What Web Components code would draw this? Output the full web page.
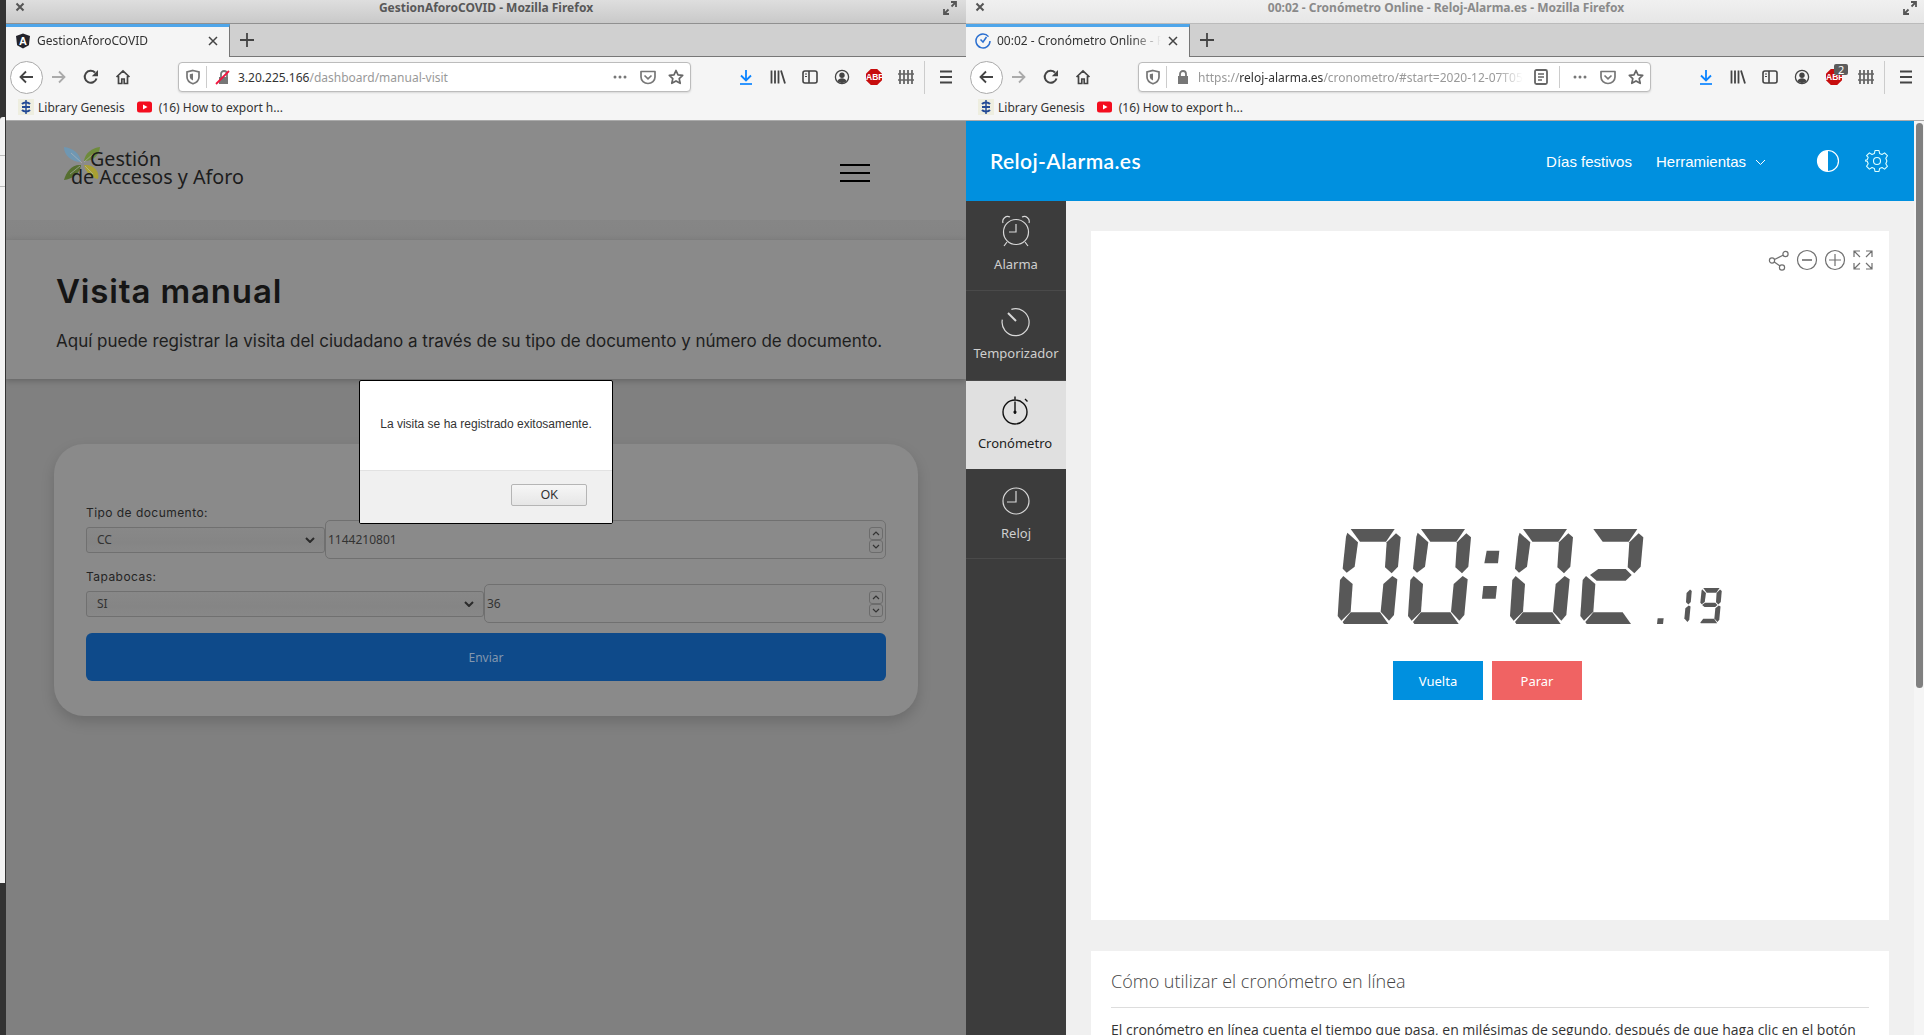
<!DOCTYPE html>
<html lang="es"><head><meta charset="utf-8"><title>Escritorio</title>
<style>html,body{margin:0;padding:0;width:1924px;height:1035px;overflow:hidden;background:#333}</style>
</head><body>
<x-desktop>
  <x-edge></x-edge>
  <fx-window wintitle="GestionAforoCOVID - Mozilla Firefox" tabtitle="GestionAforoCOVID" favicon="angular" active
     host1="3.20.225.166" rest="/dashboard/manual-visit" lock="broken">
    <gestion-page></gestion-page>
  </fx-window>
  <fx-window wintitle="00:02 - Cronómetro Online - Reloj-Alarma.es - Mozilla Firefox" tabtitle="00:02 - Cronómetro Online - Reloj-Alarma.es" favicon="clock"
     pre="https://" host1="reloj-alarma.es" rest="/cronometro/#start=2020-12-07T05:00:00" lock="ok" reader badge="2">
    <reloj-page></reloj-page>
  </fx-window>
</x-desktop>
<script>
const S=(inner,w=16,h=16,vb='0 0 16 16')=>`<svg width="${w}" height="${h}" viewBox="${vb}" fill="none" aria-hidden="true">${inner}</svg>`;
const ICON={
 back:S('<path d="M15 8H2M8 2.500 2.500 8 8 13.500" stroke="#444" stroke-width="1.800"/>'),
 fwd:S('<path d="M1 8h13M8 2.500 13.500 8 8 13.500" stroke="#aaa" stroke-width="1.800"/>'),
 reload:S('<path d="M13.500 9.500A6 6 0 1 1 12 3.500" stroke="#444" stroke-width="2"/><path d="M15 1v6.200H8.800z" fill="#444"/>'),
 home:S('<path d="M1.500 8 8 1.800 14.500 8M3.500 7v7.500h3.300V10h2.400v4.500h3.300V7" stroke="#444" stroke-width="1.700"/>'),
 shield:S('<path d="M8 1.500 14 3v5c0 3.300-2.700 5.600-6 6.800C4.700 13.600 2 11.300 2 8V3z" stroke="#777" stroke-width="1.700"/><path d="M8 4.500v7c-1.800-.8-3.200-2-3.200-3.800V5.200z" fill="#777"/>'),
 lockok:S('<path d="M3 7h10v8H3z" fill="#777"/><path d="M5 7V5a3 3 0 0 1 6 0v2" stroke="#777" stroke-width="1.800"/>',16,16),
 lockbroken:S('<path d="M4 8h9v7H4z" fill="#777"/><path d="M6 8V5a3 3 0 0 1 6 0v3" stroke="#777" stroke-width="1.800"/><path d="M1 15 14 2" stroke="#f0173f" stroke-width="1.800"/>'),
 dots:S('<circle cx="3" cy="8" r="1.500" fill="#777"/><circle cx="8" cy="8" r="1.500" fill="#777"/><circle cx="13" cy="8" r="1.500" fill="#777"/>'),
 pocket:S('<path d="M1 2.500h14v5.500a7 6.500 0 0 1-14 0z" stroke="#777" stroke-width="1.700" stroke-linejoin="round"/><path d="m4.500 6.500 3.500 3.300 3.500-3.300" stroke="#777" stroke-width="1.700"/>'),
 star:S('<path d="m8 1.500 2 4.400 4.700.5-3.500 3.200 1 4.700L8 11.900l-4.200 2.400 1-4.700L1.300 6.400 6 5.900z" stroke="#666" stroke-width="1.700" stroke-linejoin="round"/>'),
 dl:S('<path d="M8 1v10M3 6.500 8 11.500l5-5" stroke="#0a84ff" stroke-width="1.800"/><path d="M2 15h12" stroke="#0a84ff" stroke-width="1.700"/>'),
 lib:S('<path d="M1.500 1.500v13M5 1.500v13M8.500 1.500v13M11 1.500l4 13" stroke="#444" stroke-width="1.800"/>'),
 side:S('<rect x="1" y="2" width="14" height="12" rx="2" stroke="#444" stroke-width="1.600"/><path d="M7 2v12" stroke="#444" stroke-width="1.600"/><path d="M3 5h2M3 7.500h2" stroke="#444"/>'),
 acct:S('<circle cx="8" cy="8" r="6.600" stroke="#444" stroke-width="1.300"/><circle cx="8" cy="6.300" r="2.700" fill="#444"/><path d="M3.500 12.300c.8-2.200 2.500-3 4.500-3s3.700.8 4.500 3A6 6 0 0 1 8 14a6 6 0 0 1-4.500-1.700z" fill="#444"/>'),
 fence:S('<path d="M2 1v14M6 1v14M10 1v14M14 1v14" stroke="#666" stroke-width="1.800"/><path d="M0 5h16M0 11h16" stroke="#666" stroke-width="1.500"/>'),
 menu:S('<path d="M2 2.500h12M2 8h12M2 13.500h12" stroke="#444" stroke-width="1.800"/>'),
 angular:S('<path d="M8 .5 15 3l-1.100 9.200L8 15.500 2.100 12.200 1 3z" fill="#23232b"/>'),
 clock:S('<path d="M13.500 3.600A7 7 0 1 0 15 8" stroke="#2a6fd0" stroke-width="1.500"/><path d="M5.500 6.500 8 9l3.500-5" stroke="#2a6fd0" stroke-width="1.500"/>'),
 libgen:S('<rect width="16" height="16" fill="#eeeee0"/><path d="M8 1v14" stroke="#234a96" stroke-width="1.500"/><path d="M4 5c2-2 6-2 8 0M4 8h8M4 11c2 2 6 2 8 0" stroke="#234a96" stroke-width="2.200"/>'),
 yt:S('<rect x="0" y="2.500" width="15" height="11" rx="2.500" fill="#f40d1e"/><path d="m6 5.500 4.500 2.500L6 10.500z" fill="#fff"/>')
};

class XDesktop extends HTMLElement{constructor(){super();this.attachShadow({mode:'open'}).innerHTML=`<style>:host{display:flex;width:1924px;height:1035px;overflow:hidden;font-family:"Noto Sans",sans-serif}</style><slot></slot>`}}
class XEdge extends HTMLElement{constructor(){super();this.attachShadow({mode:'open'}).innerHTML=`<style>:host{display:flex;flex:none;flex-direction:column;width:6px;height:1035px;background:#333}
 .a{height:117px}.w{height:766px;background:#f3f3f3;border-radius:3px 0 0 0;width:5px;box-sizing:border-box;padding-top:38px}.l{height:1px;background:#bbb;margin-bottom:30px}</style><div class="a"></div><div class="w"><div class="l"></div><div class="l"></div></div>`}}

class FxWindow extends HTMLElement{constructor(){super();const a=n=>this.getAttribute(n)||'';const act=this.hasAttribute('active');
 const ro=this.attachShadow({mode:'open'});
 ro.innerHTML=`<style>
 :host{display:flex;flex:none;flex-direction:column;width:960px;height:1035px;position:relative;overflow:hidden;font:12px "Noto Sans",sans-serif;color:#333}
 .title{flex:none;display:flex;align-items:center;justify-content:center;position:relative;border-bottom:1px solid ${act?'#909090':'#bbb'};
   background:linear-gradient(${act?'#dedede,#c9c9c9':'#f0f0f0,#e6e6e6'});font-weight:700;font-size:12px;color:${act?'#585858':'#8a8a8a'};padding-bottom:9px;box-sizing:content-box;height:14px}
 .x{position:absolute;left:9px;top:2px;width:24px;line-height:14px}
 .x svg,.mx svg{display:block}
 .mx{position:absolute;right:9px;top:1px}
 .tabs{height:32px;flex:none;background:#d0d0d0;border-bottom:1px solid #777;display:flex}
 .tab{width:224px;box-sizing:border-box;background:#f5f5f5;border-top:3px solid #4fa6ea;border-right:1px solid #777;height:33px;display:flex;align-items:center;padding:0 10px 3px 9px;gap:6px;font-size:12px;color:#333}
 .tab .t{flex:1;white-space:nowrap;overflow:hidden;margin-left:0;-webkit-mask-image:linear-gradient(90deg,#000 82%,transparent);mask-image:linear-gradient(90deg,#000 82%,transparent)}
 .fav{position:relative;width:16px;height:16px;flex:none}
 .fav b{position:absolute;inset:0;text-align:center;color:#fff;font:700 11px/16px "Liberation Sans",sans-serif}
 .plus{width:34px;display:flex;align-items:center;justify-content:center;padding-bottom:1px}
 .nav{height:40px;flex:none;background:#f5f5f5;display:flex;align-items:center;padding-left:3.500px}
 .b{width:32px;height:32px;display:flex;align-items:center;justify-content:center;flex:none;position:relative}
 .back{width:33px;height:33px;box-sizing:border-box;border:1px solid #aaa;border-radius:50%;background:#fff;margin-right:.500px}
 .url{margin-left:39px;width:513px;height:30px;box-sizing:border-box;background:#fff;border:1px solid #bcbcbc;border-radius:4px;box-shadow:0 1px 2px rgba(0,0,0,.12);display:flex;align-items:center;margin-right:39px;flex:none;font-size:12px;color:#999}
 .u1{width:27px;display:flex;justify-content:center;flex:none}
 .sep{width:1px;height:22px;background:#ccc;flex:none}
 .lk{width:31px;display:flex;justify-content:center;flex:none}
 .txt{flex:1;white-space:nowrap;overflow:hidden;min-width:0}
 .txt b{font-weight:400;color:#333}
 .reader .txt{-webkit-mask-image:linear-gradient(90deg,#000 92%,transparent);mask-image:linear-gradient(90deg,#000 92%,transparent)}
 .r{width:28px;display:flex;justify-content:center;flex:none}
 .abp{width:16px;height:16px;background:#c70d0d;clip-path:polygon(30% 0,70% 0,100% 30%,100% 70%,70% 100%,30% 100%,0 70%,0 30%);color:#fff;font:700 8.500px/16px "Liberation Sans",sans-serif;text-align:center}
 .bdg{position:absolute;left:16px;top:3px;background:#5c5c5c;color:#fff;font:11px/11px "Noto Sans",sans-serif;border-radius:2px;padding:0 4px;height:11px}
 .vs{width:1px;height:33px;background:#ccc;margin-left:2px}
 .marks{height:23px;box-sizing:border-box;flex:none;background:#f5f5f5;border-bottom:1px solid #aaa;display:flex;align-items:center;font-size:12px;color:#333;padding:0 0 4px 12px}
 .mk{display:flex;align-items:center;gap:4px;height:16px}.mk+.mk{margin-left:12px;gap:6px}
 .spc{height:1px;flex:none;background:#f5f5f5}
 .page{flex:1;min-height:0;position:relative;overflow:hidden}
 </style>
 <div class="title"><span class="x">${S('<path d="m1.500 1.500 7 7m0-7-7 7" stroke="#555" stroke-width="2"/>',10,10,'0 0 10 10')}</span>${a('wintitle')}<span class="mx">${S('<path d="M8 1h5v5M13 1 8.500 5.500M1 8v5h5M1 13l4.500-4.500" stroke="#555" stroke-width="1.800"/>',14,14,'0 0 14 14')}</span></div>
 <div class="tabs"><div class="tab"><span class="fav">${ICON[a('favicon')]}${a('favicon')==='angular'?'<b>A</b>':''}</span><span class="t">${a('tabtitle')}</span>${S('<path d="m2 2 8 8m0-8-8 8" stroke="#444" stroke-width="1.500"/>',12,12,'0 0 12 12')}</div>
 <div class="plus">${S('<path d="M8 1v14M1 8h14" stroke="#444" stroke-width="1.800"/>',16,16)}</div></div>
 <div class="nav"><span class="b back">${ICON.back}</span><span class="b">${ICON.fwd}</span><span class="b">${ICON.reload}</span><span class="b">${ICON.home}</span>
  <div class="url ${this.hasAttribute('reader')?'reader':''}"><span class="u1">${ICON.shield}</span><span class="sep"></span><span class="lk">${ICON[a('lock')==='ok'?'lockok':'lockbroken']}</span>
   <span class="txt">${a('pre')}<b>${a('host1')}</b>${a('rest')}</span>
   ${this.hasAttribute('reader')?`<span class="r" style="width:36px">${S('<rect x="2" y="1" width="12" height="14" rx="1.500" stroke="#666" stroke-width="1.800"/><path d="M5 5h6M5 8h6M5 11h4" stroke="#666" stroke-width="1.300"/>')}</span><span class="sep" style="margin-right:6px"></span>`:''}
   <span class="r">${ICON.dots}</span><span class="r">${ICON.pocket}</span><span class="r">${ICON.star}</span></div>
  <span class="b">${ICON.dl}</span><span class="b">${ICON.lib}</span><span class="b">${ICON.side}</span><span class="b">${ICON.acct}</span>
  <span class="b"><span class="abp">ABP</span>${a('badge')?`<span class="bdg">${a('badge')}</span>`:''}</span><span class="b">${ICON.fence}</span><span class="vs"></span><span class="b" style="margin-left:5px">${ICON.menu}</span></div>
 <div class="spc"></div>
 <div class="marks"><span class="mk">${ICON.libgen}Library Genesis</span><span class="mk">${ICON.yt}(16) How to export h...</span></div>
 <div class="page"><slot></slot></div>`;
}}

class NumField extends HTMLElement{constructor(){super();this.attachShadow({mode:'open'}).innerHTML=`<style>
 :host{display:flex;align-items:center;justify-content:space-between;flex:1;min-width:0;height:39px;box-sizing:border-box;border:1px solid #707070;border-radius:5px;padding:0 2px 0 2px;font:12px "Noto Sans",sans-serif;color:#333}
 .sp{display:flex;flex-direction:column;width:14px}.sp span{height:13px;box-sizing:border-box;border:1px solid #6c6c6c;border-radius:3px;display:flex;align-items:center;justify-content:center}
 </style><span><slot></slot></span><span class="sp"><span>${S('<path d="m1 4 3-3 3 3" stroke="#333" stroke-width="1.200"/>',8,5,'0 0 8 5')}</span><span>${S('<path d="m1 1 3 3 3-3" stroke="#333" stroke-width="1.200"/>',8,5,'0 0 8 5')}</span></span>`}}
class SelField extends HTMLElement{constructor(){super();this.attachShadow({mode:'open'}).innerHTML=`<style>
 :host{display:flex;align-items:center;justify-content:space-between;flex:none;height:26px;box-sizing:border-box;border:1px solid #707070;border-radius:3px;padding:0 9px 0 10px;font:12px "Noto Sans",sans-serif;color:#333;background:linear-gradient(#888,#858585 60%,#888)}
 </style><span><slot></slot></span>${S('<path d="m1 1 4 4 4-4" stroke="#2a2a2a" stroke-width="2"/>',10,6,'0 0 10 6')}`}}
class AlertBox extends HTMLElement{constructor(){super();this.attachShadow({mode:'open'}).innerHTML=`<style>
 :host{position:absolute;left:353px;top:259px;width:254px;height:144px;box-sizing:border-box;border:1px solid #000;border-radius:2px;background:#fff;display:flex;flex-direction:column;font:12px "Liberation Sans",sans-serif;color:#333;overflow:hidden}
 .m{height:89px;flex:none;box-sizing:border-box;padding-top:36px;text-align:center;white-space:nowrap}
 .f{flex:1;background:#f0f0f0;border-top:1px solid #e2e2e2;display:flex;justify-content:flex-end;align-items:flex-start;padding:13px 25px 0 0}
 .ok{width:76px;height:22px;box-sizing:border-box;border:1px solid #b5b5b5;border-radius:2px;background:linear-gradient(#f6f6f6,#e6e6e6);text-align:center;line-height:20px;font-size:12px;color:#333;padding-left:1px}
 </style><div class="m"><slot></slot></div><div class="f"><div class="ok">OK</div></div>`}}
class GestionPage extends HTMLElement{constructor(){super();const leaf=(d,c)=>`<path d="${d}" fill="${c}"/>`;
 this.attachShadow({mode:'open'}).innerHTML=`<style>
 :host{display:block;height:914px;position:relative;background:#808080;font-family:Inter,sans-serif;color:#1e1e1e;overflow:hidden}
 header{height:99px;background:#8b8b8b;display:flex;justify-content:space-between;box-sizing:border-box;padding:26px 96px 0 58px}
 .logo{position:relative;font:19.700px/18.500px "Noto Sans",sans-serif;color:#1c1c1c;padding:2.500px 0 0 7px;white-space:nowrap;height:40px}
 .logo svg{position:absolute;left:0;top:0}
 .logo div:first-of-type{padding-left:19px}
 .logo div{position:relative}
 .bg{display:flex;flex-direction:column;gap:6px;padding-top:17px}.bg i{display:block;width:30px;height:2px;background:#000;margin-top:0}
 .band{height:20px;background:linear-gradient(#868686,#848484)}
 .hero{height:139px;box-sizing:border-box;background:#8a8a8a;box-shadow:0 2px 6px rgba(0,0,0,.22);padding:30px 0 0 50px;position:relative}
 h1{margin:0;font:600 33px/42px Inter,sans-serif;letter-spacing:.85px;color:#151515}
 p{margin:17px 0 0;font:400 17px/24px Inter,sans-serif;color:#1e1e1e;white-space:nowrap}
 .card{width:864px;height:272px;box-sizing:border-box;margin:65px 0 0 48px;background:#8a8a8a;border-radius:30px;box-shadow:0 6px 14px rgba(0,0,0,.16);padding:62px 32px 0}
 label{display:block;font:400 12px/14px Inter,sans-serif;letter-spacing:.45px;color:#242424;height:14px}
 .row{display:flex;align-items:center;width:800px}
 .send{margin-top:10px;width:800px;height:48px;border-radius:6px;background:#0e4a8a;color:#8397ae;display:flex;align-items:center;justify-content:center;font:12px "Noto Sans",sans-serif}
 .g2{margin-top:11px}
 </style>
 <header><div class="logo">${S(
   leaf('M17 15C16 6 8 1 0 0c0 8 7 15 17 15z','#6f97b2')+leaf('M20 14c1-8 8-13 16-14-1 8-6 14-16 14z','#6e8b3b')+leaf('M17 18C8 17 2 25 0 33c8-1 16-6 17-15z','#566f30')+leaf('M20 18c2 8 8 13 14 14 2-7-4-15-14-14z','#a9a033')+'<path d="M18 16 7 6M20 15l9-8M16 19 6 27M21 19l8 8" stroke="#b9b9b9" stroke-width=".6"/>',
   36,33,'0 0 36 33')}<div>Gestión</div><div>de Accesos y Aforo</div></div><div class="bg"><i></i><i></i><i></i></div></header>
 <div class="band"></div>
 <section class="hero"><h1>Visita manual</h1><p>Aquí puede registrar la visita del ciudadano a través de su tipo de documento y número de documento.</p></section>
 <section class="card"><label>Tipo de documento:</label>
  <div class="row"><sel-field style="width:239px">CC</sel-field><num-field>1144210801</num-field></div>
  <label class="g2">Tapabocas:</label>
  <div class="row"><sel-field style="width:398px">SI</sel-field><num-field>36</num-field></div>
  <div class="send">Enviar</div></section>
 <alert-box>La visita se ha registrado exitosamente.</alert-box>`}}

class LcdTimer extends HTMLElement{constructor(){super();
 const SEG={t:'92,57 224,57 198,95 120,95',ul:'82,68 114,97 104,170 80,188 68,176 78,80',ur:'228,70 242,82 234,170 215,190 195,172 200,97',ll:'70,198 98,222 92,305 64,332 53,318 60,210',lr:'217,198 232,208 222,315 207,332 182,305 190,222',b:'92,307 180,307 205,342 72,342 68,336',m:'82,195 107,177 189,177 207,195 189,212 102,212'};
 const MAP={0:'t ul ur ll lr b',1:'ur lr',2:'t ur m ll b',9:'t ul ur m lr b'};
 const dig=(d,ox,oy=0,s=1)=>MAP[d].split(' ').map(k=>`<polygon points="${SEG[k]}" transform="translate(${ox} ${oy}) scale(${s})"/>`).join('');
 const sm=(d,x)=>dig(d,x-52*.37,234-57*.37,.37);
 const body=dig(0,0)+dig(0,211)+`<polygon points="500,122 538,122 534,160 493,160"/><polygon points="490,228 531,228 527,266 486,266"/>`+dig(0,517)+dig(2,728)+`<polygon points="1013,325 1031,325 1029,342 1011,342"/>`+sm(1,1045)+sm(9,1135);
 this.attachShadow({mode:'open'}).innerHTML=`<style>:host{display:block;width:420px;height:98px;align-self:flex-start;margin:255px 0 0 229px}svg{display:block}</style><svg width="420" height="98" viewBox="0 51 1260 294" fill="#585858" role="img" aria-label="00:02.19">${body}</svg>`}}

class SideItem extends HTMLElement{constructor(){super();const on=this.hasAttribute('on');
 this.attachShadow({mode:'open'}).innerHTML=`<style>:host{display:flex;flex-direction:column;align-items:center;height:${on?88:90}px;box-sizing:border-box;padding:${this.getAttribute('pt')||12}px ${on?2:0}px 0 0;background:${on?'#e0e0e0':'#3c3c3c'};border-bottom:1px solid ${on?'#e0e0e0':'#4a4a4a'};font:13px/18px "Noto Sans",sans-serif;color:${on?'#222':'#cfcfcf'};gap:${this.getAttribute('gp')||5}px;flex:none}svg{display:block}</style><slot name="i"></slot><span><slot></slot></span>`}}
class RelojPage extends HTMLElement{constructor(){super();
 const c='stroke="#d8d8d8" stroke-width="1.200" fill="none"',k='stroke="#111" stroke-width="1.400" fill="none"',g='stroke="#6f6f6f" stroke-width="1.200" fill="none"';
 this.attachShadow({mode:'open'}).innerHTML=`<style>
 :host{display:flex;height:914px;width:958px;background:#f5f5f5;overflow:hidden}
 .col{width:948px;flex:none;display:flex;flex-direction:column}
 header{height:80px;flex:none;background:#0090df;color:#fff;display:flex;align-items:center;padding:0 25px 0 24px;font:15px "Liberation Sans",sans-serif}
 .brand{font:600 21px Lato,sans-serif;letter-spacing:.4px;flex:1;margin-top:-2px}
 .nv{margin-right:24px}.ch{margin:2px 50px 0 -15px}
 .ct{margin-right:25px;display:block}
 .row{display:flex;flex:1;min-height:0}
 .side{width:100px;background:#3c3c3c;flex:none;display:flex;flex-direction:column}
 main{flex:1;background:#f0f0f0;padding:30px 25px 0;overflow:hidden}
 .c1{height:689px;background:#fff;display:flex;flex-direction:column;align-items:center;box-sizing:border-box;padding-top:17px}
 .tools{align-self:flex-end;display:flex;gap:4px;padding-right:14px;height:24px}
 .btns{display:flex;gap:9px;margin:36px 5px 0 0}
 .bt{width:90px;height:39px;display:flex;align-items:center;justify-content:center;color:#fff;font:13px "Noto Sans",sans-serif}
 .c2{margin-top:31px;background:#fff;height:200px;padding:18px 20px 0;color:#333}
 h2{margin:0;font:300 18px/24px "Open Sans",sans-serif;color:#444;border-bottom:1px solid #ddd;padding-bottom:14px}
 .tx{margin:12px 0 0;font:14px/20px "Open Sans",sans-serif;white-space:nowrap}
 .sb{width:10px;flex:none;padding:2px 1px 0 2px;box-sizing:border-box}.th{height:565px;border-radius:4px;background:#808080}
 </style>
 <div class="col"><header><span class="brand">Reloj-Alarma.es</span><span class="nv">Días festivos</span><span class="nv" style="margin-right:24px">Herramientas</span>
  ${S('<path d="m1 1 4.500 4.500L10 1" stroke="#fff" stroke-width="1"/>',11,7,'0 0 11 7').replace('<svg','<svg class="ch"')}
  ${S('<circle cx="12" cy="12" r="10.500" stroke="#fff" stroke-width="1.200" fill="#0090df"/><path d="M12 1.500a10.500 10.500 0 0 0 0 21z" fill="#fff"/>',24,24,'0 0 24 24').replace('<svg','<svg class="ct"')}
  ${S('<circle cx="12" cy="12" r="3.500" stroke="#dff" stroke-width="1.100"/><path d="M10 1.500h4l.6 3 2.400 1 2.600-1.600 2.800 2.800L20.800 9.300l1 2.400 0 .6-1 2.400 1.600 2.600-2.800 2.800-2.600-1.600-2.400 1-.6 3h-4l-.6-3-2.400-1-2.600 1.600-2.800-2.800 1.600-2.600-1-2.400-3-.6v-.3l3-.6 1-2.400L1.600 6.700l2.800-2.800L7 5.500l2.400-1z" stroke="#dff" stroke-width="1.100" stroke-linejoin="round"/>',24,24,'0 0 24 24')}
  </header>
  <div class="row"><nav class="side">
   <side-item pt="12" gp="2"><span slot="i">${S(`<circle cx="18" cy="19" r="12.500" ${c}/><path d="M18 11v8h-7M5 10a5 5 0 0 1 7-6M31 10a5 5 0 0 0-7-6M9 29l-3 4M27 29l3 4" ${c}/>`,36,36,'0 0 36 36')}</span>Alarma</side-item>
   <side-item pt="16" gp="3"><span slot="i">${S(`<path d="M18 4.500A13.500 13.500 0 1 1 6 11" ${c} transform="rotate(-20 18 18)"/><path d="m10 9 8 8" stroke="#d8d8d8" stroke-width="2"/>`,36,30,'0 3 36 30')}</span>Temporizador</side-item>
   <side-item on pt="14" gp="3"><span slot="i">${S(`<circle cx="17" cy="19" r="12" ${k}/><path d="M17 8.500V21M17 3.500v3M27 6l2.500 2.500" ${k}/><circle cx="17" cy="19" r="1.600" fill="#111"/>`,34,32,'0 2 34 32')}</span>Cronómetro</side-item>
   <side-item pt="17" gp="4"><span slot="i">${S(`<circle cx="18" cy="18" r="13" ${c}/><path d="M18 8v11h-9" ${c}/>`,36,30,'0 3 36 30')}</span>Reloj</side-item>
  </nav><main>
   <section class="c1"><div class="tools">
    ${S(`<circle cx="5" cy="12.500" r="2.600" ${g}/><circle cx="18.500" cy="6" r="2.600" ${g}/><circle cx="15" cy="19.500" r="2.600" ${g}/><path d="m7.500 11.500 8.500-4.300M7.300 14l5.700 4" ${g}/>`,24,24,'0 0 24 24')}
    ${S(`<circle cx="12" cy="12" r="9.500" ${g}/><path d="M7 12h10" stroke="#8a8a8a" stroke-width="2"/>`,24,24,'0 0 24 24')}
    ${S(`<circle cx="12" cy="12" r="9.500" ${g}/><path d="M6 12h12M12 6v12" ${g}/>`,24,24,'0 0 24 24')}
    ${S(`<path d="M3 9V3h6M3 3l6 6M15 3h6v6M21 3l-6 6M3 15v6h6M3 21l6-6M21 15v6h-6M21 21l-6-6" ${g}/>`,24,24,'0 0 24 24')}
   </div><lcd-timer></lcd-timer>
   <div class="btns"><div class="bt" style="background:#0090df">Vuelta</div><div class="bt" style="background:#f06363">Parar</div></div></section>
   <section class="c2"><h2>Cómo utilizar el cronómetro en línea</h2><p class="tx">El cronómetro en línea cuenta el tiempo que pasa, en milésimas de segundo, después de que haga clic en el botón</p></section>
  </main></div></div>
 <div class="sb"><div class="th"></div></div>`}}
for(const [n,c] of Object.entries({'x-desktop':XDesktop,'x-edge':XEdge,'fx-window':FxWindow,'num-field':NumField,'sel-field':SelField,'alert-box':AlertBox,'gestion-page':GestionPage,'lcd-timer':LcdTimer,'side-item':SideItem,'reloj-page':RelojPage}))customElements.define(n,c);
</script>
</body></html>
